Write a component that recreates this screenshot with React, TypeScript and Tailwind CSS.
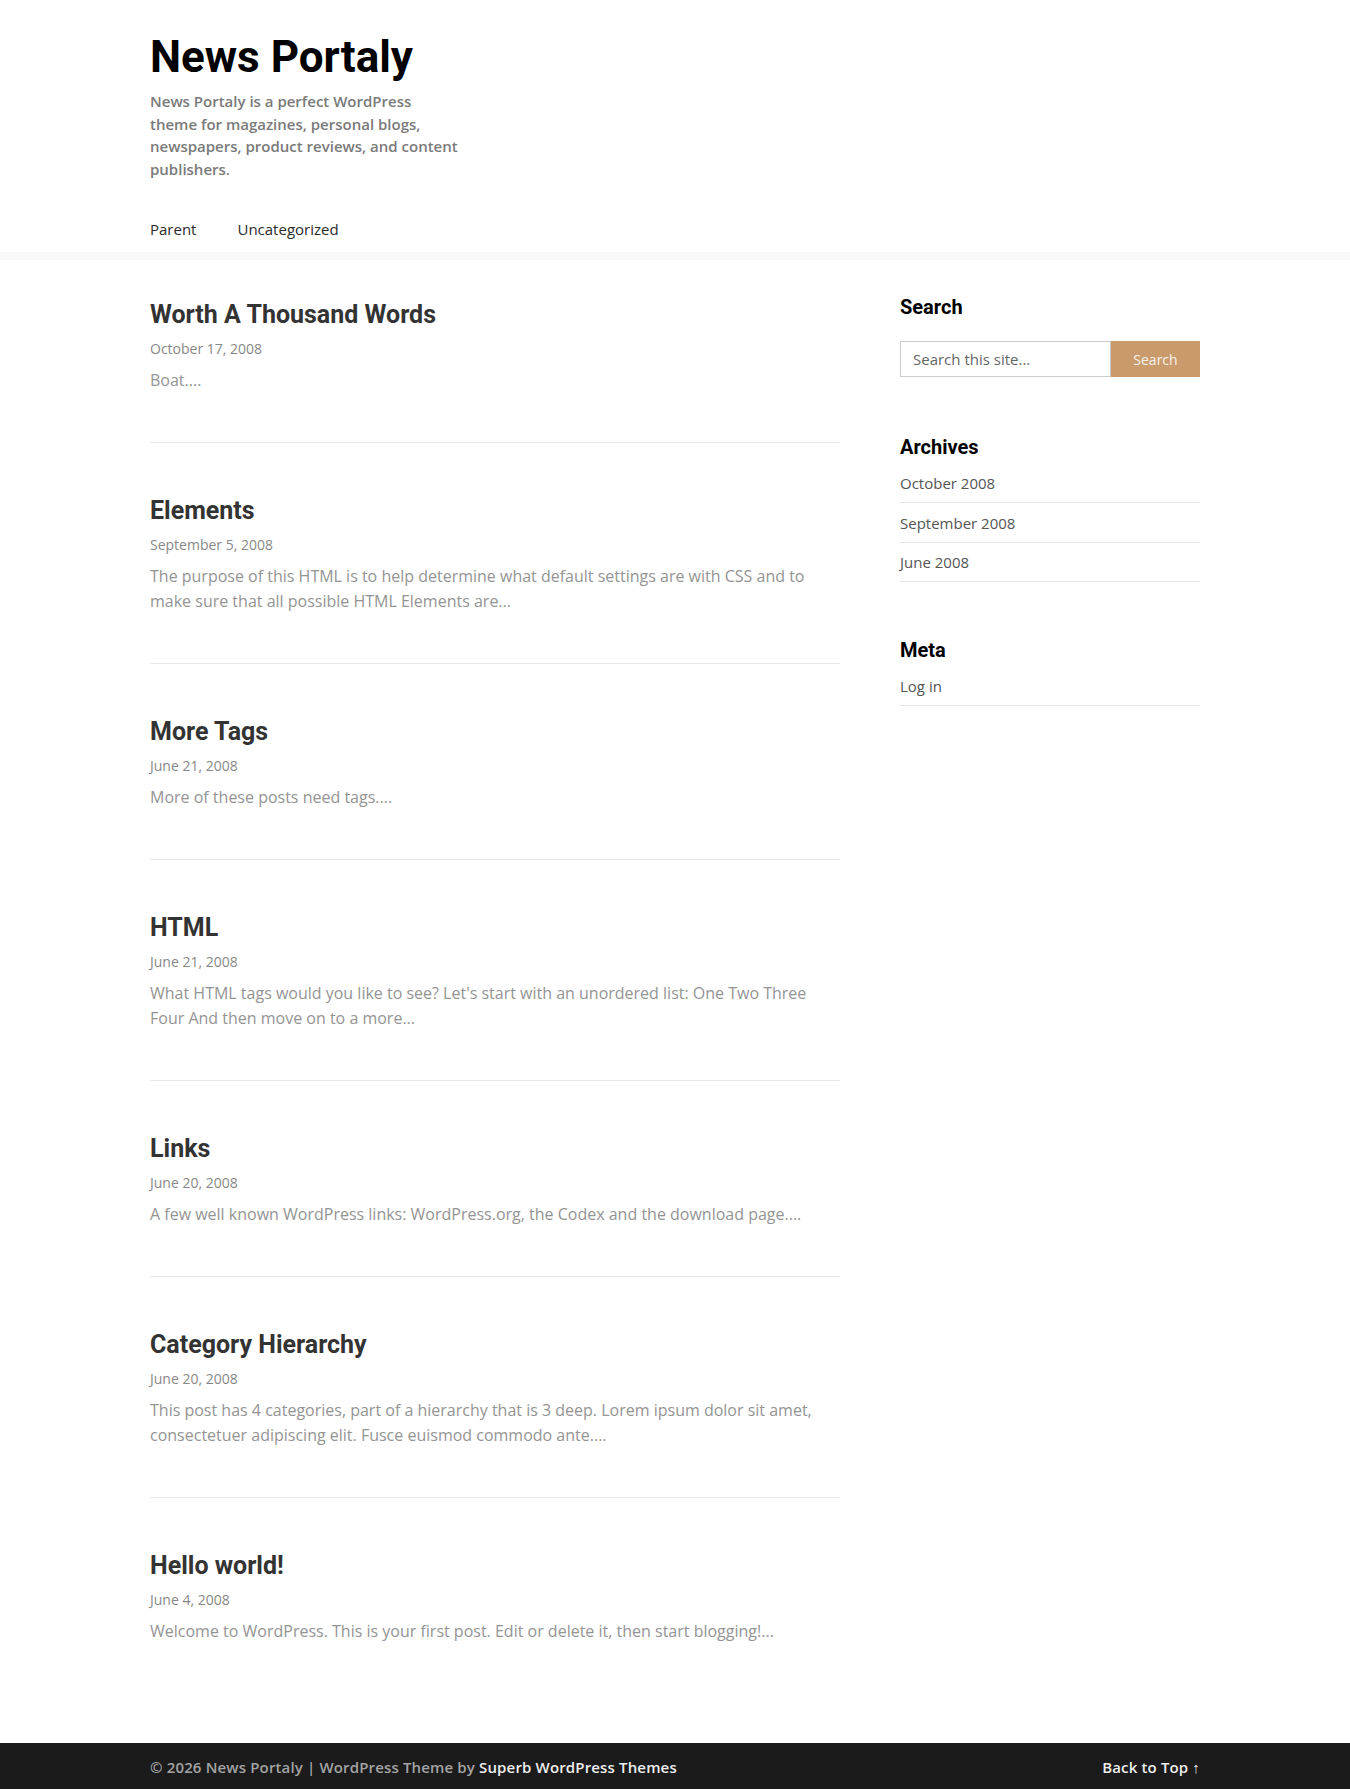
import React from "react";

const posts = [
  {
    title: "Worth A Thousand Words",
    date: "October 17, 2008",
    excerpt: "Boat....",
  },
  {
    title: "Elements",
    date: "September 5, 2008",
    excerpt:
      "The purpose of this HTML is to help determine what default settings are with CSS and to make sure that all possible HTML Elements are...",
  },
  {
    title: "More Tags",
    date: "June 21, 2008",
    excerpt: "More of these posts need tags....",
  },
  {
    title: "HTML",
    date: "June 21, 2008",
    excerpt:
      "What HTML tags would you like to see? Let's start with an unordered list: One Two Three Four And then move on to a more...",
  },
  {
    title: "Links",
    date: "June 20, 2008",
    excerpt:
      "A few well known WordPress links: WordPress.org, the Codex and the download page....",
  },
  {
    title: "Category Hierarchy",
    date: "June 20, 2008",
    excerpt:
      "This post has 4 categories, part of a hierarchy that is 3 deep. Lorem ipsum dolor sit amet, consectetuer adipiscing elit. Fusce euismod commodo ante....",
  },
  {
    title: "Hello world!",
    date: "June 4, 2008",
    excerpt:
      "Welcome to WordPress. This is your first post. Edit or delete it, then start blogging!...",
  },
];

const archives = ["October 2008", "September 2008", "June 2008"];

function WidgetTitle({ children }: { children: React.ReactNode }) {
  return (
    <h2 className="font-['Roboto',sans-serif] text-[20px] font-bold leading-6 text-black">
      {children}
    </h2>
  );
}

function LinkList({ items }: { items: string[] }) {
  return (
    <ul className="mt-[4.5px]">
      {items.map((item) => (
        <li
          key={item}
          className="border-b border-[#e6e6e6] pt-[7.5px] pb-[7px] text-[15px] leading-6 text-[#555]"
        >
          <a href="#">{item}</a>
        </li>
      ))}
    </ul>
  );
}

export default function App() {
  return (
    <div className="min-h-screen bg-white font-['Open_Sans',sans-serif] antialiased">
      <header className="border-b-8 border-[#f8f8f8]">
        <div className="mx-auto w-[1050px] pt-[30px] pb-[11px]">
          <h1 className="font-['Roboto',sans-serif] text-[44px] font-bold leading-[54px] text-black">
            <a href="#">News Portaly</a>
          </h1>
          <p className="mt-[6px] text-[15px] font-semibold leading-[22.5px] text-[#7a7a7a]">
            News Portaly is a perfect WordPress
            <br />
            theme for magazines, personal blogs,
            <br />
            newspapers, product reviews, and content
            <br />
            publishers.
          </p>
          <nav className="mt-[37px] flex gap-[41px] text-[15px] leading-6 text-[#2b2b2b]">
            <a href="#">Parent</a>
            <a href="#">Uncategorized</a>
          </nav>
        </div>
      </header>

      <div className="mx-auto flex w-[1050px] justify-between pt-[35px] pb-[50px]">
        <main className="mt-[4px] w-[690px]">
          {posts.map((post, index) => (
            <article
              key={post.title}
              className={
                index < posts.length - 1
                  ? "mb-[52px] border-b border-[#e8e8e8] pb-[49.5px]"
                  : "pb-[49.5px]"
              }
            >
              <h2 className="font-['Roboto',sans-serif] text-[25px] font-bold leading-[31px] text-[#333]">
                <a href="#">{post.title}</a>
              </h2>
              <p className="mt-[9px] text-[14px] leading-5 text-[#888]">{post.date}</p>
              <p className="mt-[8.5px] text-[16px] leading-[25px] text-[#949494]">
                {post.excerpt}
              </p>
            </article>
          ))}
        </main>

        <aside className="w-[300px]">
          <section>
            <WidgetTitle>Search</WidgetTitle>
            <form className="mt-[22px] flex h-9" onSubmit={(e) => e.preventDefault()}>
              <input
                type="text"
                placeholder="Search this site..."
                className="h-9 w-[211px] border border-[#cccccc] px-3 text-[15px] text-[#555] outline-none placeholder:text-[#666]"
              />
              <button
                type="submit"
                className="h-9 w-[89px] bg-[#c99b6c] text-[14px] text-[#f7f1ea]"
              >
                Search
              </button>
            </form>
          </section>

          <section className="mt-[58px]">
            <WidgetTitle>Archives</WidgetTitle>
            <LinkList items={archives} />
          </section>

          <section className="mt-[56px]">
            <WidgetTitle>Meta</WidgetTitle>
            <LinkList items={["Log in"]} />
          </section>
        </aside>
      </div>

      <footer className="bg-[#1b1b1b] pt-[12px] pb-[18px]">
        <div className="mx-auto flex w-[1050px] items-center justify-between text-[15px] font-semibold leading-6 tracking-[0.15px]">
          <p className="text-[#a3a3a3]">
            © 2026 News Portaly | WordPress Theme by{" "}
            <a href="#" className="text-[#eeeeee]">
              Superb WordPress Themes
            </a>
          </p>
          <a href="#" className="text-[#eeeeee]">
            Back to Top ↑
          </a>
        </div>
      </footer>
    </div>
  );
}
